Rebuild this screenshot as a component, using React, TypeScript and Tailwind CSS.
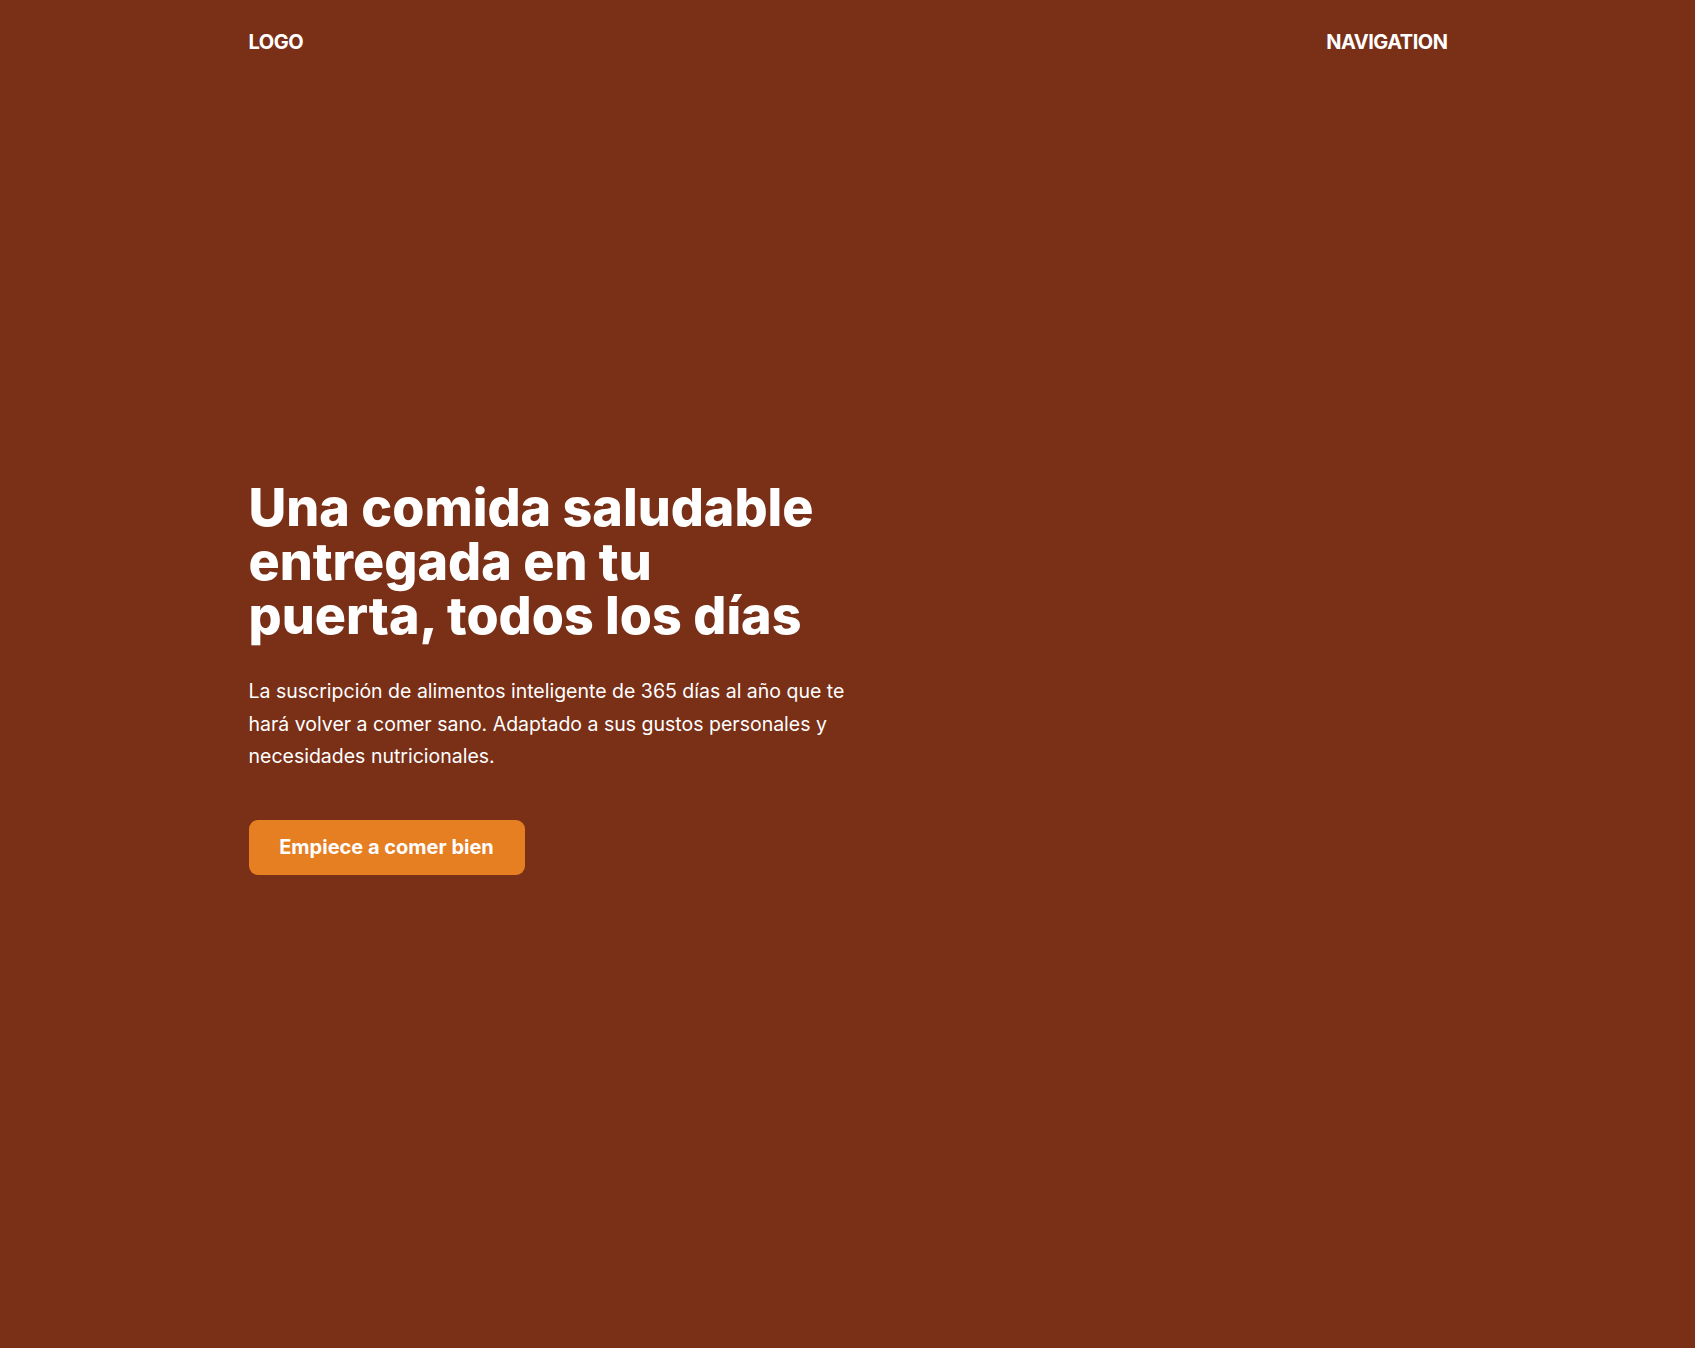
const App = () => {
    return (
        <div className="min-h-screen h-[1348px] flex flex-col bg-[#7a2f17] text-white font-['Inter','Noto_Sans',sans-serif]">
            {/* top bar */}
            <header className="w-full max-w-[1200px] mx-auto h-[84px] flex items-center justify-between">
                <a href="#" className="text-[20px] font-bold tracking-tight pl-px">LOGO</a>
                <nav className="text-[20px] font-bold tracking-tight">NAVIGATION</nav>
            </header>

            <main className="flex-1 flex items-center pb-[76px]">
                <section className="w-full max-w-[1200px] mx-auto">
                    <div className="w-[640px] pl-px">
                        <h1 className="text-[52px] leading-[54px] font-extrabold">
                            Una comida saludable<br />
                            entregada en tu<br />
                            puerta, todos los días
                        </h1>
                        <p className="mt-[32px] text-[19.5px] leading-[32.4px] w-[625px]">
                            La suscripción de alimentos inteligente de 365 días al año que te hará volver a comer sano. Adaptado a sus gustos personales y necesidades nutricionales.
                        </p>
                        <button type="button" className="mt-[47px] h-[55px] w-[276px] rounded-[9px] bg-[#e67e22] text-[20px] font-bold">
                            Empiece a comer bien
                        </button>
                    </div>
                </section>
            </main>
        </div>
    );
}

export default App;
